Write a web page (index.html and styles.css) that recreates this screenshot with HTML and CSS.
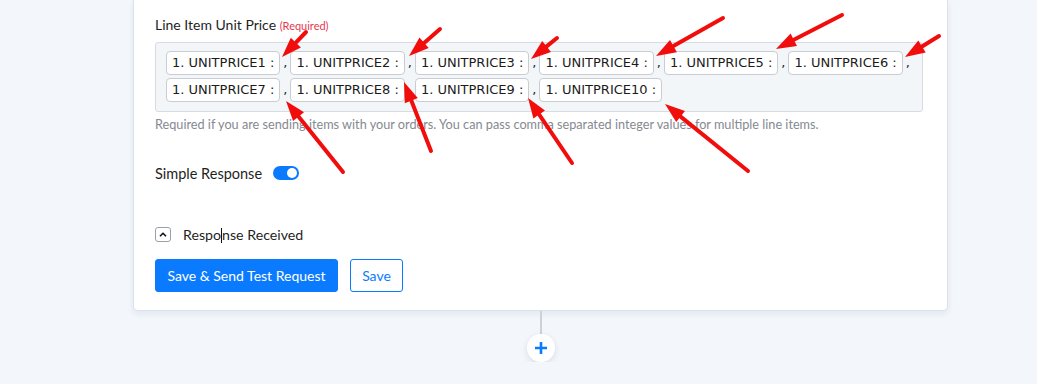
FILE: index.html
```html
<!DOCTYPE html>
<html>
  <head>
    <title>Line Item Unit Price</title>
    <link rel="stylesheet" href="styles.css">
  </head>
  <body>
    <div class="step-card">
      <div class="field-label">
        Line Item Unit Price <span class="required">(Required)</span>
      </div>
      <div class="tag-input">
        <div class="tag-row">
          <span class="tag">1. UNITPRICE1 :</span><span class="comma">,</span>
          <span class="tag">1. UNITPRICE2 :</span><span class="comma">,</span>
          <span class="tag">1. UNITPRICE3 :</span><span class="comma">,</span>
          <span class="tag">1. UNITPRICE4 :</span><span class="comma">,</span>
          <span class="tag">1. UNITPRICE5 :</span><span class="comma">,</span>
          <span class="tag">1. UNITPRICE6 :</span><span class="comma">,</span>
        </div>
        <div class="tag-row">
          <span class="tag">1. UNITPRICE7 :</span><span class="comma">,</span>
          <span class="tag">1. UNITPRICE8 :</span><span class="comma">,</span>
          <span class="tag">1. UNITPRICE9 :</span><span class="comma">,</span>
          <span class="tag">1. UNITPRICE10 :</span>
        </div>
      </div>
      <div class="help-text">
        Required if you are sending items with your orders. You can pass comma separated integer values for multiple line items.
      </div>

      <div class="toggle-row">
        <span>Simple Response</span>
        <span class="toggle"><span class="knob"></span></span>
      </div>

      <div class="collapse-row">
        <span class="chevron-box">
          <svg width="10" height="7" viewBox="0 0 10 7">
            <path d="M2 5.3 L5 2.3 L8 5.3" fill="none" stroke="#111" stroke-width="1.6"/>
          </svg>
        </span>
        <span>Respo<span class="caret"></span>nse Received</span>
      </div>

      <div class="button-row">
        <button class="btn btn-primary">Save &amp; Send Test Request</button>
        <button class="btn btn-outline">Save</button>
      </div>
    </div>

    <div class="connector">
      <div class="connector-line"></div>
      <div class="add-step">
        <svg width="14" height="14" viewBox="0 0 14 14">
          <path d="M7 1 V13 M1 7 H13" stroke="#0a7bff" stroke-width="2.6"/>
        </svg>
      </div>
    </div>

    <!-- annotation arrows drawn over the screenshot -->
    <svg class="arrows" width="1037" height="384" viewBox="0 0 1037 384">
      <g stroke="#f20d0d" stroke-width="4" stroke-linecap="round">
        <line x1="306" y1="32" x2="295.9" y2="42.6"/>
        <line x1="440" y1="29" x2="424.1" y2="42.9"/>
        <line x1="557" y1="38" x2="546.6" y2="46.4"/>
        <line x1="723" y1="18" x2="673.4" y2="46.1"/>
        <line x1="842" y1="15" x2="793.8" y2="39.8"/>
        <line x1="939" y1="36" x2="922.0" y2="46.5"/>
        <line x1="343" y1="172" x2="298.5" y2="116.6"/>
        <line x1="431" y1="151" x2="411.3" y2="100.6"/>
        <line x1="572" y1="163" x2="539.2" y2="114.6"/>
        <line x1="748" y1="171" x2="680.6" y2="116.6"/>
      </g>
      <g fill="#f20d0d">
        <polygon points="282,57 290.8,37.7 300.9,47.4"/>
        <polygon points="409,56 419.5,37.6 428.7,48.1"/>
        <polygon points="531,59 542.2,41.0 551.0,51.9"/>
        <polygon points="656,56 670.0,40.0 676.9,52.2"/>
        <polygon points="776,49 790.6,33.6 797.0,46.1"/>
        <polygon points="905,57 918.3,40.5 925.7,52.5"/>
        <polygon points="286,101 304.0,112.2 293.1,121.0"/>
        <polygon points="404,82 417.8,98.1 404.8,103.2"/>
        <polygon points="528,98 545.0,110.6 533.4,118.5"/>
        <polygon points="665,104 685.0,111.1 676.2,122.0"/>
      </g>
    </svg>
  </body>
</html>
```

FILE: styles.css
```css
body {
  background: #f3f6fa;
  color: #1f1f1f;
  font-family: Lato, "Open Sans", sans-serif;
  margin: 0px;
  overflow: hidden;
  position: relative;
}

.step-card {
  background: #FFF;
  border: 1px solid #d9e1f3;
  border-top: none;
  border-radius: 0 0 5px 5px;
  box-shadow: 0 3px 6px rgba(40, 60, 110, 0.08);
  box-sizing: border-box;
  margin-left: 133px;
  padding: 16px 22px 18px 21px;
  width: 815px;
}

.field-label {
  font-size: 14px;
  line-height: 18px;
}

.required {
  color: #e53950;
  font-size: 11px;
}

.tag-input {
  background: #f3f6f9;
  border: 1px solid #d7dce3;
  border-radius: 3px;
  box-sizing: border-box;
  display: flex;
  flex-direction: column;
  gap: 3px;
  height: 70px;
  margin-top: 7px;
  padding: 8px 10px 9px 10px;
  width: 768px;
}

.tag-row {
  align-items: baseline;
  display: flex;
}

.tag {
  background: #FFF;
  border: 1px solid #c9ccd1;
  border-radius: 4px;
  color: #1b1b1b;
  font-family: "DejaVu Sans", Verdana, sans-serif;
  font-size: 13px;
  line-height: 22px;
  padding: 0 5px;
  white-space: nowrap;
}

.comma {
  font-family: "DejaVu Sans", Verdana, sans-serif;
  font-size: 13px;
  padding: 0 3px 0 3px;
}

.help-text {
  color: #858a91;
  font-size: 12.7px;
  line-height: 18px;
  margin-top: 3px;
}

.toggle-row {
  align-items: center;
  display: flex;
  font-size: 14.5px;
  gap: 11px;
  height: 20px;
  margin-top: 30px;
}

.toggle {
  background: #0a7bff;
  border-radius: 7px;
  box-sizing: border-box;
  display: flex;
  height: 14px;
  justify-content: flex-end;
  padding: 2px;
  width: 26px;
}

.knob {
  background: #FFF;
  border-radius: 50%;
  height: 10px;
  width: 10px;
}

.collapse-row {
  align-items: center;
  display: flex;
  font-size: 14.2px;
  gap: 12px;
  height: 20px;
  margin-top: 41px;
}

.chevron-box {
  align-items: center;
  background: #FFF;
  border: 1px solid #9aa0a8;
  border-radius: 3px;
  box-sizing: border-box;
  display: flex;
  height: 15px;
  justify-content: center;
  width: 16px;
}

.caret {
  background: #111;
  display: inline-block;
  height: 15px;
  vertical-align: -3px;
  width: 1px;
}

.button-row {
  display: flex;
  gap: 12px;
  margin-top: 15px;
}

.btn {
  border-radius: 3px;
  box-sizing: border-box;
  font-family: Lato, "Open Sans", sans-serif;
  font-size: 14px;
  height: 33px;
}

.btn-primary {
  background: #0a7bff;
  border: 1px solid #0a7bff;
  color: #FFF;
  width: 183px;
}

.btn-outline {
  background: #FFF;
  border: 1px solid #0a7bff;
  color: #0a7bff;
  width: 53px;
}

.connector {
  align-items: center;
  display: flex;
  flex-direction: column;
  margin-left: 133px;
  width: 816px;
}

.connector-line {
  background: #ccd1d8;
  height: 23px;
  width: 2px;
}

.add-step {
  align-items: center;
  background: #FFF;
  border-radius: 50%;
  box-shadow: 0 2px 6px rgba(30, 50, 90, 0.12);
  display: flex;
  height: 28px;
  justify-content: center;
  width: 28px;
}

.arrows {
  left: 0;
  pointer-events: none;
  position: absolute;
  top: 0;
}
```
